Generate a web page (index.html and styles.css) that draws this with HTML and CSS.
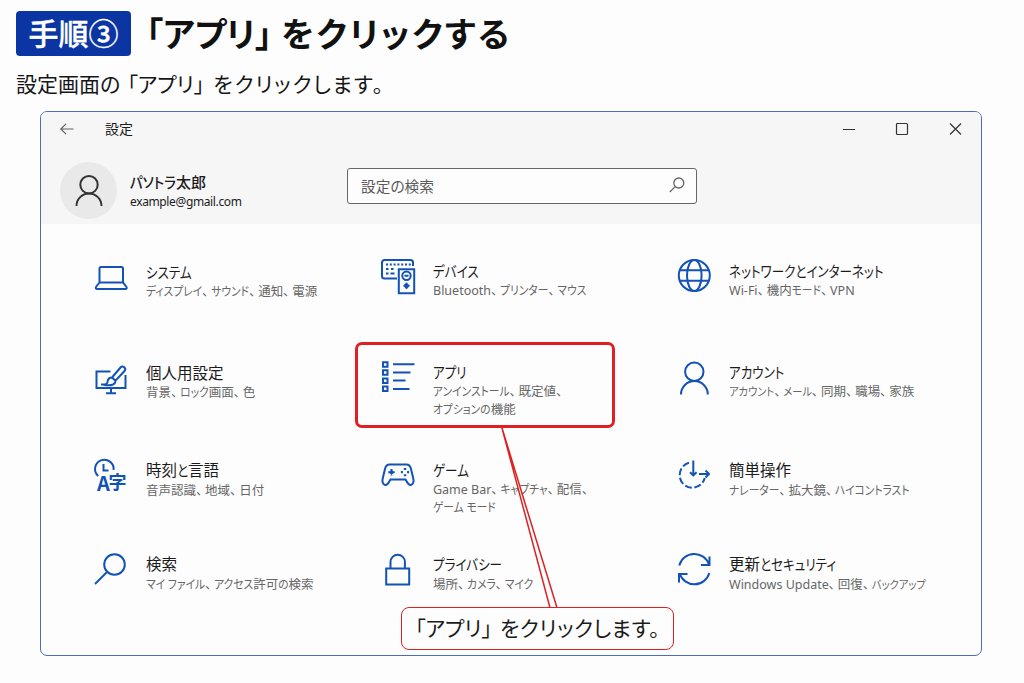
FILE: index.html
```
<!DOCTYPE html>
<html lang="ja">

<head>
  <meta charset="UTF-8">
  <title>設定</title>
  <link rel="stylesheet" href="styles.css">
</head>

<body>
  <div class="step">
    <span class="badge">手順③</span>
    <h1>「アプリ」<span class="after">をクリックする</span></h1>
  </div>
  <p class="lead">設定画面の<span class="word">「アプリ」</span><span class="after">をクリックします。</span></p>

  <div class="window">
    <div class="head">
      <div class="titlebar">
        <svg class="back" width="14" height="12" viewBox="0 0 14 12"><path d="M13.500 6H.8M6 .8L.8 6 6 11.200"/></svg>
        <span class="caption">設定</span>
        <svg class="ctrl" width="120" height="14" viewBox="0 0 120 14"><path d="M1 7.500h12M108 1.500l11 11M119 1.500l-11 11"/><rect x="54.500" y="1.500" width="11" height="11" rx="1"/></svg>
      </div>
      <div class="account">
        <div class="avatar">
          <svg width="28" height="32" viewBox="0 0 28 32"><circle cx="14" cy="9.700" r="8.700"/><path d="M1.500 31a12.500 12.500 0 0 1 25 0"/></svg>
        </div>
        <div class="user">
          <p class="name"><span class="k">パソトラ</span>太郎</p>
          <p class="mail">example@gmail.com</p>
        </div>
        <div class="search">
          <span>設定の検索</span>
          <svg width="16" height="16" viewBox="0 0 16 16"><circle cx="9.800" cy="6" r="5"/><path d="M6.200 9.600L.8 15"/></svg>
        </div>
      </div>
    </div>

    <div class="list">
      <div class="item low">
        <svg class="icon" viewBox="0 0 36 36"><path d="M6.500 21.500v-14a1.500 1.500 0 0 1 1.500-1.500h20.500a1.500 1.500 0 0 1 1.500 1.500v14M6.500 21.500L3 26q-.8 2 1.300 2h28q2 0 1.200-2L30 21.500z"/></svg>
        <div class="info">
          <p class="title"><span class="k">システム</span></p>
          <p class="desc"><span class="k">ディスプレイ</span><i>、</i><span class="k">サウンド</span><i>、</i>通知<i>、</i>電源</p>
        </div>
      </div>
      <div class="item">
        <svg class="icon" viewBox="0 0 36 36"><path d="M17 18.500H4.500a2.500 2.500 0 0 1-2.500-2.500V2.500A2.500 2.500 0 0 1 4.500 0h26A2.500 2.500 0 0 1 33 2.500V6M18.800 9.200h15.400v24H18.800z"/><path d="M6 4.500h25" stroke-dasharray="2 1.800"/><path d="M6 9h2.500M11 9h2.500M6 13.500h2.500M10.500 13.500h4"/><circle cx="26.500" cy="15.800" r="4.200"/><path d="M24.500 15.800h4M26.500 22.800v6M23.500 25.800h6M24.500 25.800l2-2 2 2-2 2z"/></svg>
        <div class="info">
          <p class="title"><span class="k">デバイス</span></p>
          <p class="desc">Bluetooth<i>、</i><span class="k">プリンター</span><i>、</i><span class="k">マウス</span></p>
        </div>
      </div>
      <div class="item">
        <svg class="icon" viewBox="0 0 36 36"><circle cx="18.300" cy="15.500" r="15.500"/><ellipse cx="18.300" cy="15.500" rx="7.300" ry="15.500"/><path d="M4 10.300h28.600M4 20.800h28.600"/></svg>
        <div class="info">
          <p class="title"><span class="k">ネットワークとインターネット</span></p>
          <p class="desc">Wi-Fi<i>、</i>機内<span class="k">モード</span><i>、</i>VPN</p>
        </div>
      </div>

      <div class="item low">
        <svg class="icon" viewBox="0 0 36 36"><path d="M17.500 9.500H3.500V26h29V13M18 26v5M13 31.300h10"/><path d="M19 15.500l8.500-10a2.600 2.600 0 0 1 4 3.500l-9 9.700zM19 15.500q-4 0-4.500 4.500-.3 2.500-4.500 2.500 6 1.500 9.500.3 3-1.300 3-4.100zM8 22.500h6"/></svg>
        <div class="info">
          <p class="title">個人用設定</p>
          <p class="desc">背景<i>、</i><span class="k">ロック</span>画面<i>、</i>色</p>
        </div>
      </div>
      <div class="item picked">
        <svg class="icon" viewBox="0 0 36 36"><path d="M3 1.300h4.500v4.500H3zM3 9.300h4.500v4.500H3zM3 17.600h4.500v4.500H3zM3 25.600h4.500v4.500H3zM13 3.200h21.500M13 11.400h17.500M13 19.600h12.500M13 27.900h16.500"/></svg>
        <div class="info">
          <p class="title"><span class="k">アプリ</span></p>
          <p class="desc"><span class="k">アンインストール</span><i>、</i>既定値<i>、</i><br><span class="k">オプションの</span>機能</p>
        </div>
      </div>
      <div class="item">
        <svg class="icon" viewBox="0 0 36 36"><circle cx="18.300" cy="10.800" r="9.200"/><path d="M5 33.500a13.400 13.400 0 0 1 26.800 0"/></svg>
        <div class="info">
          <p class="title"><span class="k">アカウント</span></p>
          <p class="desc tight"><span class="k">アカウント</span><i>、</i><span class="k">メール</span><i>、</i>同期<i>、</i>職場<i>、</i>家族</p>
        </div>
      </div>

      <div class="item down">
        <svg class="icon" viewBox="0 0 36 36"><path d="M5.200 17A9.300 9.300 0 1 1 20.600 11M10.500 5v6.500h5"/><text x="4" y="32" class="glyph-a">A</text><text x="15.500" y="29.500" class="glyph-ji">字</text></svg>
        <div class="info">
          <p class="title">時刻<span class="k">と</span>言語</p>
          <p class="desc">音声認識<i>、</i>地域<i>、</i>日付</p>
        </div>
      </div>
      <div class="item">
        <svg class="icon" viewBox="0 0 36 36"><path d="M9.500 5.500h17q3.500 0 4.500 4.500l2.300 9.500q1 5-2 6.300-2.500.7-4.300-2.800l-1.500-2.500H10.500L9 23q-1.800 3.500-4.300 2.800-3-1.300-2-6.300L5 10q1-4.500 4.500-4.500z"/><path d="M11.500 10v6.400M8.300 13.200h6.400M10 13.200l1.500-1.500 1.500 1.500-1.500 1.500z"/><path d="M25 8.900v2M25 15.300v2M20.900 13.100h2M27.100 13.100h2" stroke-width="2.400"/></svg>
        <div class="info">
          <p class="title"><span class="k">ゲーム</span></p>
          <p class="desc">Game Bar<i>、</i><span class="k">キャプチャ</span><i>、</i>配信<i>、</i><br><span class="k">ゲーム モード</span></p>
        </div>
      </div>
      <div class="item down">
        <svg class="icon" viewBox="0 0 36 36"><path d="M13 3.800A12.700 12.700 0 1 0 28.700 19" stroke-dasharray="7 2.600"/><path d="M17.300 1.500v13.500M14 13.300l3.300 3 3.300-3M23 15h10M29.500 11.500L33 15l-3.500 3.500"/></svg>
        <div class="info">
          <p class="title">簡単操作</p>
          <p class="desc"><span class="k">ナレーター</span><i>、</i>拡大鏡<i>、</i><span class="k">ハイコントラスト</span></p>
        </div>
      </div>

      <div class="item down">
        <svg class="icon" viewBox="0 0 36 36"><circle cx="21.500" cy="11.500" r="10.300"/><path d="M14 19L2 31"/></svg>
        <div class="info">
          <p class="title">検索</p>
          <p class="desc"><span class="k">マイ ファイル</span><i>、</i><span class="k">アクセス</span>許可<span class="k">の</span>検索</p>
        </div>
      </div>
      <div class="item down">
        <svg class="icon" viewBox="0 0 36 36"><path d="M6.200 15.500h23V31.500h-23zM10.500 15.500V9a7.200 7.200 0 0 1 14.400 0v6.500"/></svg>
        <div class="info">
          <p class="title"><span class="k">プライバシー</span></p>
          <p class="desc">場所<i>、</i><span class="k">カメラ</span><i>、</i><span class="k">マイク</span></p>
        </div>
      </div>
      <div class="item down">
        <svg class="icon" viewBox="0 0 36 36"><path d="M3.300 12.500A15.500 15.500 0 0 1 33 11.500M33.500 3.500V12H25M33.300 20A15.500 15.500 0 0 1 3.600 20.500M3 29.500V21H11.500"/></svg>
        <div class="info">
          <p class="title">更新<span class="k">とセキュリティ</span></p>
          <p class="desc tight">Windows Update<i>、</i>回復<i>、</i><span class="k">バックアップ</span></p>
        </div>
      </div>
    </div>
  </div>

  <!-- 吹き出し -->
  <svg class="pointer" width="60" height="182" viewBox="0 0 60 182"><path d="M50 181.800L1.700 1 57 181.800"/></svg>
  <div class="callout">「アプリ」<span class="after">をクリックします。</span></div>
</body>

</html>
```
FILE: styles.css
```
* {
  box-sizing: border-box;
}

body {
  margin: 0;
  width: 1024px;
  height: 683px;
  overflow: hidden;
  position: relative;
  background-color: #fdfdfd;
  color: #1b1b1b;
  font-family: "Noto Sans", "Noto Sans CJK JP", sans-serif;
  font-feature-settings: "palt";
}

p,
h1 {
  margin: 0;
  white-space: nowrap;
}

svg {
  fill: none;
  overflow: visible;
  flex: none;
}

/* 幅の狭いカナ */
.k {
  display: inline-block;
  font-size: .81em;
  line-height: 1;
  transform: scaleY(1.18);
  transform-origin: 0 80%;
}

.step {
  display: flex;
  align-items: center;
  padding: 11px 0 0 16px;
  height: 56px;
}

.badge {
  width: 115px;
  height: 45px;
  line-height: 43px;
  text-align: center;
  border-radius: 4px;
  background-color: #0a35a2;
  color: #fff;
  font-size: 30px;
  font-weight: 500;
  -webkit-text-stroke: .4px #fff;
  font-family: "Noto Sans CJK JP", sans-serif;
}

.step h1 {
  margin: 2px 0 0 15px;
  font-size: 34px;
  line-height: 45px;
  font-weight: 700;
  color: #111;
}

.step .after {
  margin-left: 9px;
  letter-spacing: 2.4px;
}

.lead {
  margin: 12px 0 0 16px;
  height: 32px;
  line-height: 32px;
  font-size: 21px;
  color: #161616;
}

.lead .word {
  margin-left: 7px;
}

.lead .after {
  margin-left: 9px;
  letter-spacing: 1.8px;
}

.window {
  width: 942px;
  height: 545px;
  margin: 11px 0 0 40px;
  border: 1px solid #4a6fb8;
  border-radius: 7px;
  overflow: hidden;
}

.head {
  height: 112px;
  background-color: #f6f6f7;
}

.titlebar {
  display: flex;
  align-items: center;
  height: 34px;
  padding: 0 19px 0 19px;
}

.titlebar svg {
  stroke: #333;
  stroke-width: 1.2;
}

.back {
  opacity: .75;
}

.caption {
  margin: -3px 0 0 31px;
  font-size: 14px;
}

.ctrl {
  margin-left: auto;
}

.account {
  display: flex;
  padding: 16px 0 0 19px;
}

.avatar {
  width: 57px;
  height: 57px;
  border-radius: 50%;
  background-color: #e9e9e9;
  display: flex;
  align-items: center;
  justify-content: center;
}

.avatar svg {
  stroke: #333;
  stroke-width: 2;
}

.user {
  width: 230px;
  padding: 9px 0 0 13px;
}

.user .name {
  font-size: 15px;
  line-height: 22px;
  font-weight: 500;
}

.user .name .k {
  font-size: .9em;
  transform: scaleY(1.08);
}

.user .mail {
  font-size: 12px;
  line-height: 17px;
  letter-spacing: -.37px;
}

.search {
  width: 350px;
  height: 36px;
  margin-top: 6px;
  padding: 0 11px 2px 13px;
  border: 1px solid #666;
  border-radius: 3px;
  background-color: #fdfdfd;
  display: flex;
  align-items: center;
  justify-content: space-between;
  font-size: 14.7px;
  color: #5a5a5a;
}

.search svg {
  stroke: #666;
  stroke-width: 1.3;
}

.list {
  display: grid;
  grid-template-columns: 287px 296px 300px;
  grid-template-rows: 101px 98px 94px 80px;
  padding: 36px 0 0 52px;
}

.item {
  display: flex;
}

.low {
  padding-top: 1px;
}

.icon {
  width: 36px;
  height: 36px;
  stroke: #1253b4;
  stroke-width: 2;
}

.glyph-a,
.glyph-ji {
  fill: #1253b4;
  stroke: none;
  font-weight: 700;
  font-size: 20px;
  font-family: "Noto Sans CJK JP", sans-serif;
}

.glyph-ji {
  font-size: 18px;
}

.info {
  margin-left: 17px;
}

.title {
  font-size: 15.5px;
  line-height: 22px;
}

.desc {
  font-size: 12.5px;
  line-height: 18px;
  color: #666;
}

.desc .k {
  font-size: .86em;
  transform: scaleY(1.12);
}

.tight .k {
  font-size: .82em;
}

.desc i {
  font-style: normal;
  letter-spacing: 2.8px;
}

.down .desc {
  padding-top: 1px;
}

.picked {
  position: relative;
}

/* 赤枠 */
.picked::before {
  content: "";
  box-sizing: border-box;
  position: absolute;
  left: -25px;
  top: -19px;
  width: 260px;
  height: 86px;
  border: 3px solid #e01f22;
  border-radius: 7px;
}

.pointer {
  position: absolute;
  left: 500px;
  top: 426px;
  stroke: #dc2222;
  stroke-width: 1.5;
}

.callout {
  position: absolute;
  left: 401px;
  top: 607px;
  width: 273px;
  height: 43px;
  padding-left: 13px;
  line-height: 41px;
  border: 1.5px solid #dc2222;
  border-radius: 8px;
  background-color: #fdfdfd;
  font-size: 21px;
  white-space: nowrap;
}

.callout .after {
  margin-left: 8px;
  letter-spacing: .5px;
}
```
